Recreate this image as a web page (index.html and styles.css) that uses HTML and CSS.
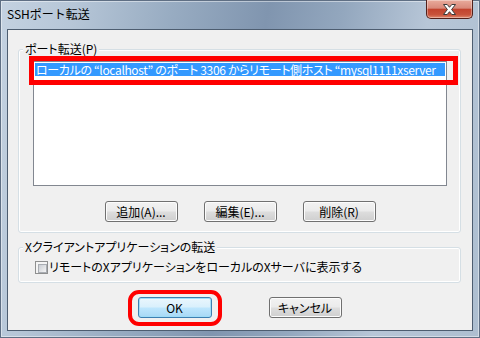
FILE: index.html
```html
<!DOCTYPE html>
<html>
<head>
<title>SSHポート転送</title>
<meta charset="UTF-8">
<link rel="stylesheet" href="styles.css">
</head>
<body>

<div class="window">
  <div class="titlebar">
    <span class="title">SSHポート転送</span>
    <button class="close" title="閉じる">
      <svg width="13" height="11" viewBox="0 0 13 11">
        <path d="M0.5 0.5H4.2L6.5 3.3L8.8 0.5H12.5L8.6 5.5L12.5 10.5H8.8L6.5 7.7L4.2 10.5H0.5L4.4 5.5Z" fill="#fff" stroke="#3a3a3a" stroke-width="1"/>
      </svg>
    </button>
  </div>

  <div class="client">
    <fieldset class="group">
      <legend>ポート転送(P)</legend>
      <div class="group-body forward">
        <div class="listbox">
          <div class="list-item selected">ローカルの “localhost” のポート 3306 からリモート側ホスト “mysql1111xserver</div>
          <div class="mark mark-list"></div>
        </div>
        <div class="button-row">
          <button class="btn">追加(A)...</button>
          <button class="btn">編集(E)...</button>
          <button class="btn">削除(R)</button>
        </div>
      </div>
    </fieldset>

    <fieldset class="group group-x">
      <legend>Xクライアントアプリケーションの転送</legend>
      <div class="group-body xfwd">
        <label class="check-row">
          <span class="check"></span>
          <span class="check-label">リモートのXアプリケーションをローカルのXサーバに表示する</span>
        </label>
      </div>
    </fieldset>

    <div class="dialog-buttons">
      <span class="mark-wrap">
        <button class="btn btn-default">OK</button>
        <span class="mark mark-ok"></span>
      </span>
      <button class="btn">キャンセル</button>
    </div>
  </div>
</div>

</body>
</html>
```

FILE: styles.css
```css
* {
  box-sizing: border-box;
}
html, body {
  margin: 0;
  height: 100%;
}
body {
  font-family: "Noto Sans CJK JP", "Liberation Sans", sans-serif;
  font-size: 12px;
  color: #000;
  overflow: hidden;
  background: #fff;
}

/* aero frame */
.window {
  width: 480px;
  height: 338px;
  display: flex;
  flex-direction: column;
  padding: 0 7px 7px 7px;
  background: linear-gradient(100deg, #c4d2e1 0%, #b6c6d7 14%, #98acc2 32%, #8095af 50%, #93a7be 64%, #b7c6d7 80%, #adbed0 100%);
  box-shadow: inset 0 0 0 1px #5f6f84, inset 0 0 0 2px rgba(255, 255, 255, .45);
}
.titlebar {
  height: 29px;
  display: flex;
  align-items: flex-start;
}
.title {
  padding-top: 6px;
  line-height: 15px;
  font-size: 12px;
}
.close {
  margin-left: auto;
  width: 47px;
  height: 19px;
  padding: 0;
  border: 1px solid #52201a;
  border-top: 0;
  border-radius: 0 0 5px 5px;
  background: linear-gradient(#e9ab9c 0%, #d9897a 45%, #c2432e 52%, #c8533b 82%, #e08a70 100%);
  box-shadow: inset 0 0 0 1px rgba(255, 255, 255, .35);
  display: flex;
  align-items: center;
  justify-content: center;
}

/* client area */
.client {
  flex: 1;
  background: #f0f0f0;
  border: 1px solid #4d5d70;
  padding: 12px 11px 0 10px;
}
.group {
  margin: 0;
  padding: 0;
  min-width: 0;
  border: 1px solid #d5dfe5;
  border-radius: 3px;
  box-shadow: inset 0 0 0 1px #fff;
}
.group legend {
  margin-left: 4px;
  padding: 0 2px;
  line-height: 14px;
  background: #f0f0f0;
  font-feature-settings: "palt";
}
.group-x {
  margin-top: 7px;
}
.forward {
  padding: 5px 13px 10px 14px;
}
.xfwd {
  padding: 6px 13px 8px 16px;
}

.listbox {
  position: relative;
  height: 125px;
  border: 1px solid #828790;
  background: #fff;
  padding: 1px;
}
.list-item {
  height: 13px;
  line-height: 13px;
  padding-left: 1px;
  white-space: nowrap;
  letter-spacing: -0.35px;
  font-feature-settings: "palt";
}
.list-item.selected {
  background: #3399ff;
  color: #fff;
}

.button-row {
  margin-top: 15px;
  display: flex;
  justify-content: center;
  gap: 26px;
}
.btn {
  width: 73px;
  height: 21px;
  padding: 0;
  border: 1px solid #707070;
  border-radius: 3px;
  background: linear-gradient(#f2f2f2 0%, #ebebeb 48%, #dddddd 52%, #cfcfcf 100%);
  box-shadow: inset 0 0 0 1px #fcfcfc;
  font-family: inherit;
  font-size: 12px;
  line-height: 19px;
  color: #000;
  font-feature-settings: "palt";
}
.btn-default {
  width: 74px;
  border-color: #3c7fb1;
  background: linear-gradient(#eaf6fd 0%, #d9f0fc 48%, #bee6fd 52%, #a7d9f5 100%);
  box-shadow: inset 0 0 0 1px #9fdcf7;
}

.check-row {
  display: flex;
  align-items: center;
  line-height: 14px;
}
.check {
  width: 13px;
  height: 13px;
  border: 1px solid #8e8f8f;
  background: #f4f4f4;
  padding: 2px;
  margin-right: 1px;
}
.check::before {
  content: "";
  display: block;
  width: 100%;
  height: 100%;
  border: 1px solid #a9adb3;
  background: linear-gradient(135deg, #c9cdd3, #f4f4f4);
}
.check-label {
  font-feature-settings: "palt";
}

.dialog-buttons {
  margin-top: 14px;
  display: flex;
  justify-content: center;
  gap: 57px;
}
.mark-wrap {
  position: relative;
  display: flex;
}

/* red annotation frames */
.mark {
  position: absolute;
  border-style: solid;
  border-color: #ff0000;
  pointer-events: none;
}
.mark-list {
  top: -6px;
  left: -5px;
  width: 429px;
  height: 29px;
  border-width: 5px;
}
.mark-ok {
  top: -7px;
  left: -10px;
  right: -10px;
  bottom: -8px;
  border-width: 4px;
  border-radius: 11px;
}
```
